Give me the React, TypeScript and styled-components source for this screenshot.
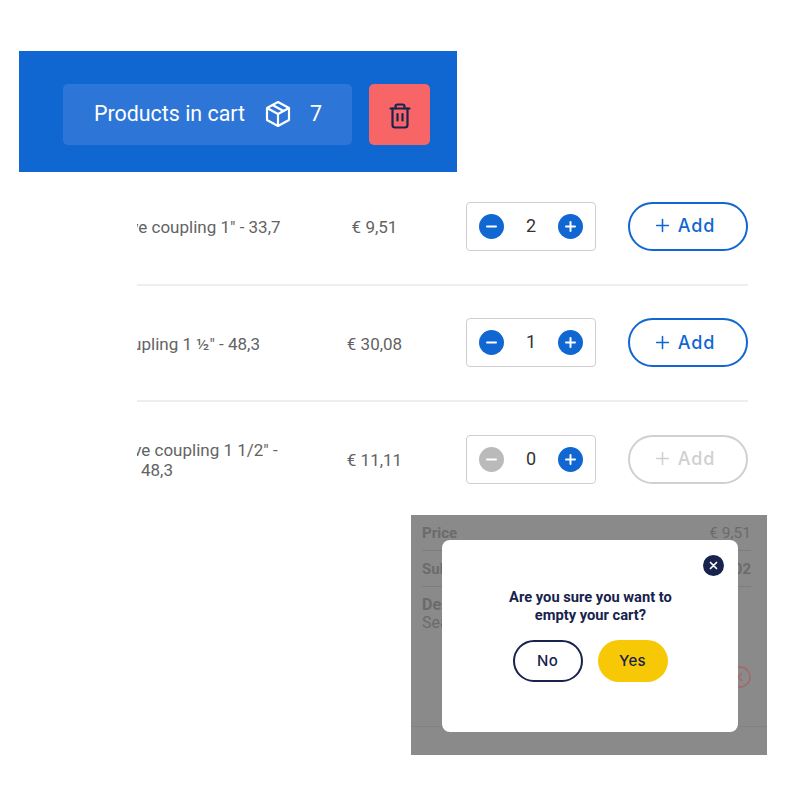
import React from "react";
import styled, { createGlobalStyle } from "styled-components";

const GlobalStyle = createGlobalStyle`
  html, body {
    margin: 0;
    padding: 0;
    background: #fff;
    font-family: Roboto, "Liberation Sans", sans-serif;
  }
`;

const Page = styled.div`
  width: 800px;
  height: 800px;
  overflow: hidden;
  padding-top: 51px;
  box-sizing: border-box;
`;

const Header = styled.header`
  margin-left: 19px;
  width: 438px;
  height: 121px;
  background: #1167d2;
  display: flex;
  align-items: center;
  padding: 6px 0 0 44px;
  gap: 17px;
  box-sizing: border-box;
`;

const CartPill = styled.div`
  width: 289px;
  height: 61px;
  border-radius: 5px;
  background: #2d76d7;
  color: #fff;
  display: flex;
  align-items: center;
  padding: 0 0 2px 31px;
  box-sizing: border-box;
  font-size: 21.4px;
`;

const CartLabel = styled.span`
  width: 171px;
`;

const CartCount = styled.span`
  margin-left: 19px;
`;

const TrashButton = styled.button`
  width: 61px;
  height: 61px;
  border: 0;
  border-radius: 5px;
  background: #f76567;
  display: flex;
  align-items: center;
  justify-content: center;
  padding: 3px 0 0;
`;

const Rows = styled.div`
  margin-left: 137px;
  width: 611px;
`;

type Place = "first" | "middle" | "last";

const Row = styled.div<{ $place: Place }>`
  height: ${(p) => (p.$place === "first" ? 114 : p.$place === "last" ? 113 : 116)}px;
  box-sizing: border-box;
  display: flex;
  align-items: center;
  border-bottom: ${(p) => (p.$place === "last" ? "0" : "2px solid #eeeeee")};
  padding-bottom: ${(p) => (p.$place === "first" ? 4 : p.$place === "middle" ? 1 : 0)}px;
  padding-top: ${(p) => (p.$place === "last" ? 1 : 0)}px;
`;

const NameCell = styled.div<{ $place: Place }>`
  width: 170px;
  flex-shrink: 0;
  overflow: hidden;
  padding-top: ${(p) => (p.$place === "middle" ? 3 : 2)}px;
  color: #636363;
  font-size: 17px;
  line-height: 20px;
  white-space: nowrap;
`;

const NameLine = styled.div<{ $shift: number }>`
  margin-left: ${(p) => p.$shift}px;
`;

const PriceCell = styled.div<{ $place: Place }>`
  width: 135px;
  flex-shrink: 0;
  margin-right: 24px;
  padding-top: ${(p) => (p.$place === "middle" ? 3 : 2)}px;
  color: #636363;
  font-size: 17px;
  text-align: center;
`;

const Stepper = styled.div`
  width: 130px;
  height: 49px;
  flex-shrink: 0;
  box-sizing: border-box;
  border: 1px solid #cfcfcf;
  border-radius: 4px;
  display: flex;
  align-items: center;
  justify-content: space-between;
  padding: 0 12px;
  color: #333;
  font-size: 18px;
`;

const StepValue = styled.span`
  padding-bottom: 2px;
`;

const RoundButton = styled.button<{ $disabled?: boolean }>`
  width: 25px;
  height: 25px;
  border: 0;
  padding: 0;
  border-radius: 50%;
  background: ${(p) => (p.$disabled ? "#bababa" : "#1167d2")};
  display: flex;
  align-items: center;
  justify-content: center;
`;

const AddButton = styled.button<{ $disabled?: boolean }>`
  margin-left: 32px;
  width: 120px;
  height: 49px;
  flex-shrink: 0;
  box-sizing: border-box;
  border-radius: 25px;
  background: #fff;
  border: 2px solid ${(p) => (p.$disabled ? "#d0d0d0" : "#1167d2")};
  color: ${(p) => (p.$disabled ? "#d0d0d0" : "#1167d2")};
  font-family: Inter, "Noto Sans", sans-serif;
  font-weight: 500;
  font-size: 18px;
  letter-spacing: 0.8px;
  display: flex;
  align-items: center;
  justify-content: center;
  gap: 7px;
  padding: 0 7px 1px 0;
`;

const Dimmed = styled.section`
  position: relative;
  margin-left: 411px;
  width: 356px;
  height: 240px;
  box-sizing: border-box;
  background: #8a8a8a;
  color: #6b6b6b;
  font-size: 15px;
  overflow: hidden;
  padding: 0 16px 0 11px;
`;

const InfoRow = styled.div<{ $bold?: boolean }>`
  height: 35px;
  display: flex;
  justify-content: space-between;
  align-items: center;
  border-bottom: 1px solid #7d7d7d;
  font-weight: ${(p) => (p.$bold ? 700 : 400)};
`;

const InfoValue = styled.span<{ $light?: boolean }>`
  font-weight: ${(p) => (p.$light ? 400 : 700)};
  font-size: ${(p) => (p.$light ? 15.5 : 15)}px;
`;

const Desc = styled.div`
  padding-top: 9px;
  line-height: 18px;
  font-size: 16px;
`;

const DescTitle = styled.div`
  font-weight: 700;
`;

const FooterLine = styled.div`
  position: absolute;
  left: 0;
  right: 0;
  top: 211px;
  border-top: 1px solid #828282;
`;

const RemoveIcon = styled.svg`
  position: absolute;
  left: 318px;
  top: 151px;
`;

const Modal = styled.div`
  position: absolute;
  left: 31px;
  top: 25px;
  width: 296px;
  height: 192px;
  border-radius: 8px;
  background: #fff;
  color: #17224d;
  display: flex;
  flex-direction: column;
  align-items: center;
  padding-top: 48px;
  box-sizing: border-box;
`;

const CloseButton = styled.button`
  position: absolute;
  top: 15px;
  right: 14px;
  width: 21px;
  height: 21px;
  border-radius: 50%;
  border: 0;
  padding: 0;
  background: #17224d;
  display: flex;
  align-items: center;
  justify-content: center;
`;

const Question = styled.div`
  font-weight: 700;
  font-size: 14.7px;
  line-height: 18px;
  padding-left: 1px;
  text-align: center;
`;

const ModalActions = styled.div`
  margin-top: 16px;
  display: flex;
  gap: 15px;
`;

const ModalButton = styled.button<{ $primary?: boolean }>`
  width: 70px;
  height: 42px;
  box-sizing: border-box;
  border-radius: 21px;
  border: ${(p) => (p.$primary ? "0" : "2px solid #17224d")};
  background: ${(p) => (p.$primary ? "#f7c806" : "#fff")};
  color: #17224d;
  font-family: Inter, "Noto Sans", sans-serif;
  font-weight: 500;
  font-size: 15px;
  letter-spacing: 0.4px;
  padding: 0 0 2px;
`;

const Minus = () => (
  <svg width="13" height="13" viewBox="0 0 13 13">
    <path d="M2 6.5h9" stroke="#fff" strokeWidth="2" strokeLinecap="round" />
  </svg>
);

const Plus = ({ color = "#fff", size = 13, weight = 2 }: { color?: string; size?: number; weight?: number }) => (
  <svg width={size} height={size} viewBox="0 0 13 13">
    <path d="M2 6.5h9M6.5 2v9" stroke={color} strokeWidth={weight} strokeLinecap="round" />
  </svg>
);

const BoxIcon = () => (
  <svg width="26" height="28" viewBox="0 0 26 28" fill="none" stroke="#fff" strokeWidth="2.2" strokeLinejoin="round" style={{ flexShrink: 0 }}>
    <path d="M13 2 L24 8 V20 L13 26 L2 20 V8 Z" />
    <path d="M2 8 L13 14 L24 8 M13 14 V26" />
    <path d="M7.5 5 L18.5 11" />
  </svg>
);

const TrashIcon = () => (
  <svg width="22" height="26" viewBox="0 0 22 26" fill="none" stroke="#1b2450" strokeWidth="2.2" strokeLinecap="round" strokeLinejoin="round">
    <path d="M1.5 5.5h19" />
    <path d="M6.5 5.5V3.5a2 2 0 0 1 2-2h5a2 2 0 0 1 2 2v2" />
    <path d="M3.5 5.5v16.5a2.5 2.5 0 0 0 2.5 2.5h10a2.5 2.5 0 0 0 2.5-2.5V5.5" />
    <path d="M8.5 11v6.5M13.5 11v6.5" />
  </svg>
);

type Item = { lines: { text: string; shift: number }[]; price: string; qty: number; place: Place };

const items: Item[] = [
  { lines: [{ text: 'Sleeve coupling 1" - 33,7', shift: -39 }], price: "€ 9,51", qty: 2, place: "first" },
  { lines: [{ text: 'Sleeve coupling 1 ½" - 48,3', shift: -77 }], price: "€ 30,08", qty: 1, place: "middle" },
  {
    lines: [
      { text: 'Sleeve coupling 1 1/2" -', shift: -36 },
      { text: "48,3", shift: 4 },
    ],
    price: "€ 11,11",
    qty: 0,
    place: "last",
  },
];

export default function App() {
  return (
    <Page>
      <GlobalStyle />
      <Header>
        <CartPill>
          <CartLabel>Products in cart</CartLabel>
          <BoxIcon />
          <CartCount>7</CartCount>
        </CartPill>
        <TrashButton aria-label="Empty cart">
          <TrashIcon />
        </TrashButton>
      </Header>

      <Rows>
        {items.map((item) => (
          <Row key={item.price} $place={item.place}>
            <NameCell $place={item.place}>
              {item.lines.map((line) => (
                <NameLine key={line.text} $shift={line.shift}>
                  {line.text}
                </NameLine>
              ))}
            </NameCell>
            <PriceCell $place={item.place}>{item.price}</PriceCell>
            <Stepper>
              <RoundButton $disabled={item.qty === 0}>
                <Minus />
              </RoundButton>
              <StepValue>{item.qty}</StepValue>
              <RoundButton>
                <Plus />
              </RoundButton>
            </Stepper>
            <AddButton $disabled={item.qty === 0}>
              <Plus color={item.qty === 0 ? "#d0d0d0" : "#1167d2"} size={17} weight={1.2} />
              Add
            </AddButton>
          </Row>
        ))}
      </Rows>

      <Dimmed>
        <InfoRow $bold>
          <span>Price</span>
          <InfoValue $light>€ 9,51</InfoValue>
        </InfoRow>
        <InfoRow $bold>
          <span>Subtotal</span>
          <InfoValue>€ 19,02</InfoValue>
        </InfoRow>
        <Desc>
          <DescTitle>Description</DescTitle>
          Seamless
        </Desc>
        <RemoveIcon width="22" height="22" viewBox="0 0 22 22" fill="none" stroke="#a86464" strokeWidth="1.3">
          <circle cx="11" cy="11" r="10" />
          <path d="M13 7l-4 4 4 4" />
        </RemoveIcon>
        <FooterLine />
        <Modal>
          <CloseButton aria-label="Close">
            <svg width="9" height="9" viewBox="0 0 9 9">
              <path d="M1.5 1.5l6 6M7.5 1.5l-6 6" stroke="#fff" strokeWidth="1.7" strokeLinecap="round" />
            </svg>
          </CloseButton>
          <Question>
            Are you sure you want to
            <br />
            empty your cart?
          </Question>
          <ModalActions>
            <ModalButton>No</ModalButton>
            <ModalButton $primary>Yes</ModalButton>
          </ModalActions>
        </Modal>
      </Dimmed>
    </Page>
  );
}
